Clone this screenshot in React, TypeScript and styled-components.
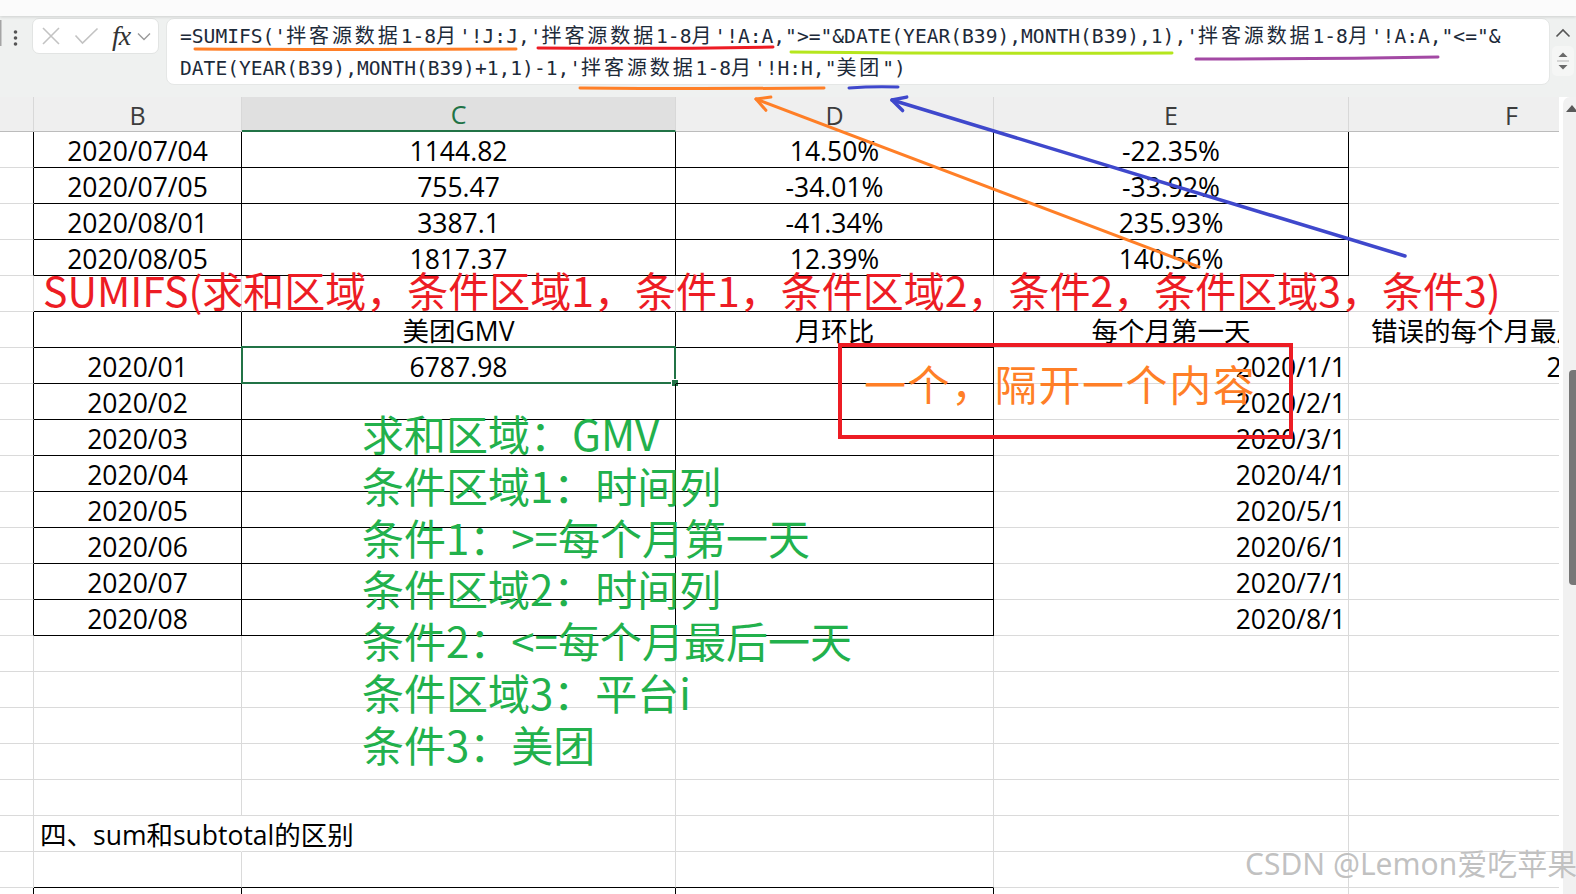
import React from 'react';
import styled, { createGlobalStyle } from 'styled-components';

const GlobalStyle = createGlobalStyle`
  html, body { margin: 0; padding: 0; background: #ffffff; }
  body {
    width: 1576px;
    height: 894px;
    overflow: hidden;
    font-family: "Open Sans", "Noto Sans CJK SC", sans-serif;
  }
  #root { width: 1576px; height: 894px; }
`;

const COLS = [34, 208, 434, 318, 355, 326];
const GRID = '#dadada';
const INK = '#000000';
const EXCEL_GREEN = '#217346';

type Align = 'left' | 'center' | 'right';

const Page = styled.div`
  position: relative;
  width: 1576px;
  height: 894px;
  overflow: hidden;
  display: flex;
  flex-direction: column;
  background: #ffffff;
`;

const TopStrip = styled.div`
  height: 16px;
  flex: 0 0 16px;
  background: #fbfbfb;
  box-shadow: 0 1px 3px rgba(0, 0, 0, 0.14);
  position: relative;
  z-index: 1;
`;

const FormulaBar = styled.div`
  height: 81px;
  flex: 0 0 81px;
  box-sizing: border-box;
  padding-top: 2px;
  display: flex;
  align-items: flex-start;
  background: #eff1f0;
`;

const Grip = styled.svg`
  flex: 0 0 32px;
  width: 32px;
  height: 36px;
`;

const FxBox = styled.div`
  flex: 0 0 127px;
  width: 127px;
  height: 36px;
  box-sizing: border-box;
  border: 1px solid #e2e4e3;
  border-radius: 7px;
  background: #ffffff;
  display: flex;
  align-items: center;
`;

const IconSlot = styled.div<{ $ml: number }>`
  margin-left: ${(p) => p.$ml}px;
  display: flex;
  align-items: center;
`;

const FxGlyph = styled.span`
  font-family: "Liberation Serif", "DejaVu Serif", serif;
  font-style: italic;
  font-size: 28px;
  line-height: 30px;
  color: #333333;
  letter-spacing: -1px;
`;

const FormulaInput = styled.div`
  margin-left: 7px;
  flex: 0 0 1384px;
  width: 1384px;
  height: 67px;
  box-sizing: border-box;
  border: 1px solid #e5e7e6;
  border-radius: 8px;
  background: #ffffff;
  padding: 2px 0 0 13px;
  overflow: hidden;
`;

const FormulaLine = styled.div`
  height: 31.5px;
  font-family: "DejaVu Sans Mono", "Liberation Mono", monospace;
  font-size: 19.6px;
  line-height: 31.5px;
  color: #1d2a39;
  white-space: pre;
`;

const Cjk = styled.span`
  font-family: "Noto Sans CJK SC", sans-serif;
  font-size: 20px;
  line-height: 1;
  letter-spacing: 2.9px;
`;

const BarControls = styled.div`
  flex: 1 1 auto;
  display: flex;
  flex-direction: column;
  align-items: center;
  padding-top: 10px;
`;

const Stepper = styled.div`
  margin-top: 8px;
  width: 22px;
  height: 30px;
  border-radius: 5px;
  background: #f5f6f5;
  display: flex;
  align-items: center;
  justify-content: center;
`;

const Body = styled.div`
  flex: 1 1 auto;
  display: flex;
  min-height: 0;
`;

const SheetArea = styled.div`
  flex: 0 0 1559px;
  width: 1559px;
  overflow: hidden;
  display: flex;
  flex-direction: column;
`;

const HeaderRow = styled.div`
  display: flex;
  height: 35px;
  flex: 0 0 35px;
`;

const HeaderCell = styled.div<{ $w: number; $active?: boolean }>`
  flex: 0 0 ${(p) => p.$w}px;
  width: ${(p) => p.$w}px;
  height: 35px;
  box-sizing: border-box;
  border-right: 1px solid #d8d8d8;
  border-bottom: ${(p) => (p.$active ? `2px solid ${EXCEL_GREEN}` : '1px solid #bcbcbc')};
  background: ${(p) => (p.$active ? '#e0e0e0' : '#efefef')};
  color: ${(p) => (p.$active ? EXCEL_GREEN : '#3c3c3c')};
  display: flex;
  align-items: center;
  justify-content: center;
  font-size: 25px;
  line-height: 30px;
  padding-top: 1px;
`;

const Row = styled.div`
  display: flex;
  height: 36px;
  flex: 0 0 36px;
`;

const Cell = styled.div<{ $w: number; $align: Align; $rb: string; $bb: string; $indent?: number }>`
  position: relative;
  flex: 0 0 ${(p) => p.$w}px;
  width: ${(p) => p.$w}px;
  height: 36px;
  box-sizing: border-box;
  border-right: 1px solid ${(p) => p.$rb};
  border-bottom: 1px solid ${(p) => p.$bb};
  display: flex;
  align-items: center;
  justify-content: ${(p) => (p.$align === 'left' ? 'flex-start' : p.$align === 'right' ? 'flex-end' : 'center')};
  padding-top: 2px;
  padding-right: ${(p) => (p.$align === 'right' ? 2 : 0)}px;
  padding-left: ${(p) => (p.$indent !== undefined ? p.$indent : p.$align === 'left' ? 6 : 0)}px;
  white-space: nowrap;
  font-size: 26.5px;
  line-height: 34px;
  color: ${INK};
`;

const Selection = styled.div`
  position: absolute;
  top: -2px;
  left: -1px;
  right: -1px;
  bottom: -1px;
  border: 2px solid ${EXCEL_GREEN};
  pointer-events: none;
`;

const FillHandle = styled.div`
  position: absolute;
  right: -5px;
  bottom: -5px;
  width: 6px;
  height: 6px;
  background: ${EXCEL_GREEN};
  border: 1px solid #ffffff;
`;

const ScrollTrack = styled.div`
  margin-left: 4px;
  flex: 0 0 13px;
  width: 13px;
  background: #f1f1f1;
  border-radius: 7px 0 0 0;
  display: flex;
  flex-direction: column;
  align-items: flex-end;
`;

const ScrollUp = styled.svg`
  margin-top: 6px;
  width: 12px;
  height: 10px;
`;

const ScrollThumb = styled.div`
  margin-top: 257px;
  width: 7px;
  height: 215px;
  background: #777777;
  border-radius: 4px 0 0 4px;
`;

const RedFormula = styled.div`
  position: absolute;
  left: 43px;
  top: 267px;
  font-family: "Noto Sans CJK SC", sans-serif;
  font-size: 41px;
  line-height: 44px;
  color: #ed1c24;
  white-space: nowrap;
  pointer-events: none;
`;

const GreenNotes = styled.div`
  position: absolute;
  left: 362px;
  top: 407px;
  font-family: "Noto Sans CJK SC", sans-serif;
  font-size: 42px;
  line-height: 51.8px;
  color: #22b14c;
  white-space: nowrap;
  pointer-events: none;
`;

const OrangeNote = styled.div`
  position: absolute;
  left: 864px;
  top: 360px;
  font-family: "Noto Sans CJK SC", sans-serif;
  font-size: 42px;
  line-height: 46px;
  letter-spacing: 1.6px;
  color: #ff7f27;
  white-space: nowrap;
  pointer-events: none;
`;

const Watermark = styled.div`
  position: absolute;
  left: 1245px;
  top: 847px;
  font-family: "Noto Sans", "Noto Sans CJK SC", sans-serif;
  font-size: 30px;
  line-height: 34px;
  color: rgba(170, 170, 170, 0.72);
  text-shadow: 0 0 1px rgba(255, 255, 255, 0.9);
  white-space: nowrap;
  pointer-events: none;
`;

const Annotations = styled.svg`
  position: absolute;
  left: 0;
  top: 0;
  width: 1576px;
  height: 894px;
  pointer-events: none;
`;

interface RowDef {
  cells?: string[];
  align?: Align[];
  indent?: (number | undefined)[];
}

const CC: Align = 'center';
const ALL_C: Align[] = [CC, CC, CC, CC, CC, CC];
const MONTH_ALIGN: Align[] = [CC, CC, CC, CC, 'right', 'right'];

const rowsData: RowDef[] = [
  { cells: ['', '2020/07/04', '1144.82', '14.50%', '-22.35%', ''] },
  { cells: ['', '2020/07/05', '755.47', '-34.01%', '-33.92%', ''] },
  { cells: ['', '2020/08/01', '3387.1', '-41.34%', '235.93%', ''] },
  { cells: ['', '2020/08/05', '1817.37', '12.39%', '140.56%', ''] },
  {},
  {
    cells: ['', '', '美团GMV', '月环比', '每个月第一天', '错误的每个月最后一天'],
    align: [CC, CC, CC, CC, CC, 'left'],
    indent: [undefined, undefined, undefined, undefined, undefined, 22],
  },
  { cells: ['', '2020/01', '6787.98', '', '2020/1/1', '2020/1/31'], align: MONTH_ALIGN },
  { cells: ['', '2020/02', '', '', '2020/2/1', ''], align: MONTH_ALIGN },
  { cells: ['', '2020/03', '', '', '2020/3/1', ''], align: MONTH_ALIGN },
  { cells: ['', '2020/04', '', '', '2020/4/1', ''], align: MONTH_ALIGN },
  { cells: ['', '2020/05', '', '', '2020/5/1', ''], align: MONTH_ALIGN },
  { cells: ['', '2020/06', '', '', '2020/6/1', ''], align: MONTH_ALIGN },
  { cells: ['', '2020/07', '', '', '2020/7/1', ''], align: MONTH_ALIGN },
  { cells: ['', '2020/08', '', '', '2020/8/1', ''], align: MONTH_ALIGN },
  {},
  {},
  {},
  {},
  {},
  {
    cells: ['', '四、sum和subtotal的区别', '', '', '', ''],
    align: [CC, 'left', CC, CC, CC, CC],
  },
  {},
  {},
];

function rightColor(r: number, c: number): string {
  if (r >= 0 && r <= 3 && c <= 4) return INK;
  if (r >= 5 && r <= 13 && c <= 3) return INK;
  if (r === 21 && c <= 3) return INK;
  if (r === 19 && c === 1) return 'transparent';
  return GRID;
}

function bottomColor(r: number, c: number): string {
  if (c === 0) return GRID;
  if (r >= 0 && r <= 4 && c <= 4) return INK;
  if (r >= 5 && r <= 13 && c <= 3) return INK;
  if (r === 20 && c <= 3) return INK;
  return GRID;
}

const CJK_RE = /([\u3000-\u303f\u4e00-\u9fff\uff00-\uffef]+)/;

function renderFormula(s: string) {
  return s.split(CJK_RE).map((part, i) =>
    i % 2 === 1 ? <Cjk key={i}>{part}</Cjk> : <React.Fragment key={i}>{part}</React.Fragment>
  );
}

const FORMULA_1 = `=SUMIFS('拌客源数据1-8月'!J:J,'拌客源数据1-8月'!A:A,">="&DATE(YEAR(B39),MONTH(B39),1),'拌客源数据1-8月'!A:A,"<="&`;
const FORMULA_2 = `DATE(YEAR(B39),MONTH(B39)+1,1)-1,'拌客源数据1-8月'!H:H,"美团")`;

const GREEN_LINES = [
  '求和区域：GMV',
  '条件区域1：时间列',
  '条件1：>=每个月第一天',
  '条件区域2：时间列',
  '条件2：<=每个月最后一天',
  '条件区域3：平台i',
  '条件3：美团',
];

function arrowPath(x1: number, y1: number, x2: number, y2: number, len = 15, ang = 28): string {
  const dx = x1 - x2;
  const dy = y1 - y2;
  const l = Math.hypot(dx, dy);
  const ux = dx / l;
  const uy = dy / l;
  const a = (ang * Math.PI) / 180;
  const rot = (s: number) => {
    const c = Math.cos(s * a);
    const n = Math.sin(s * a);
    return [x2 + len * (ux * c - uy * n), y2 + len * (ux * n + uy * c)];
  };
  const [ax, ay] = rot(1);
  const [bx, by] = rot(-1);
  return `M${ax.toFixed(1)},${ay.toFixed(1)} L${x2},${y2} L${bx.toFixed(1)},${by.toFixed(1)}`;
}

const HEADERS = ['', 'B', 'C', 'D', 'E', 'F'];

export default function App() {
  return (
    <>
      <GlobalStyle />
      <Page>
        <TopStrip />
        <FormulaBar>
          <Grip viewBox="0 0 32 36">
            <rect x="0" y="2" width="1.5" height="26" fill="#a5a5a5" />
            <circle cx="15.5" cy="14" r="1.8" fill="#555" />
            <circle cx="15.5" cy="20" r="1.8" fill="#555" />
            <circle cx="15.5" cy="26" r="1.8" fill="#555" />
          </Grip>
          <FxBox>
            <IconSlot $ml={8}>
              <svg width="20" height="20" viewBox="0 0 20 20">
                <path d="M2 2 L18 18 M18 2 L2 18" stroke="#c3c3c3" strokeWidth="1.6" fill="none" />
              </svg>
            </IconSlot>
            <IconSlot $ml={13}>
              <svg width="25" height="18" viewBox="0 0 25 18">
                <path d="M1.5 8.5 L8.5 16 L23.5 1.5" stroke="#c3c3c3" strokeWidth="1.6" fill="none" />
              </svg>
            </IconSlot>
            <IconSlot $ml={13}>
              <FxGlyph>fx</FxGlyph>
            </IconSlot>
            <IconSlot $ml={7}>
              <svg width="14" height="9" viewBox="0 0 14 9">
                <path d="M1 1.5 L7 7.5 L13 1.5" stroke="#9a9a9a" strokeWidth="1.4" fill="none" />
              </svg>
            </IconSlot>
          </FxBox>
          <FormulaInput>
            <FormulaLine>{renderFormula(FORMULA_1)}</FormulaLine>
            <FormulaLine>{renderFormula(FORMULA_2)}</FormulaLine>
          </FormulaInput>
          <BarControls>
            <svg width="16" height="10" viewBox="0 0 16 10">
              <path d="M1.5 8.5 L8 2 L14.5 8.5" stroke="#555" strokeWidth="1.6" fill="none" />
            </svg>
            <Stepper>
              <svg width="14" height="24" viewBox="0 0 14 24">
                <path d="M2.5 8 L7 3.5 L11.5 8 Z" fill="#6a6a6a" />
                <line x1="1" y1="12" x2="13" y2="12" stroke="#b5b5b5" strokeWidth="1" />
                <path d="M2.5 16 L7 20.5 L11.5 16 Z" fill="#6a6a6a" />
              </svg>
            </Stepper>
          </BarControls>
        </FormulaBar>
        <Body>
          <SheetArea>
            <HeaderRow>
              {HEADERS.map((h, c) => (
                <HeaderCell key={c} $w={COLS[c]} $active={c === 2}>
                  {h}
                </HeaderCell>
              ))}
            </HeaderRow>
            {rowsData.map((row, r) => (
              <Row key={r}>
                {COLS.map((w, c) => {
                  const text = row.cells ? row.cells[c] : '';
                  const align = (row.align || ALL_C)[c];
                  const indent = row.indent ? row.indent[c] : undefined;
                  return (
                    <Cell
                      key={c}
                      $w={w}
                      $align={align}
                      $rb={rightColor(r, c)}
                      $bb={bottomColor(r, c)}
                      $indent={indent}
                    >
                      {text}
                      {r === 6 && c === 2 && (
                        <Selection>
                          <FillHandle />
                        </Selection>
                      )}
                    </Cell>
                  );
                })}
              </Row>
            ))}
          </SheetArea>
          <ScrollTrack>
            <ScrollUp viewBox="0 0 12 10">
              <path d="M2 9 L8 2 L14 9 Z" fill="#5a5a5a" />
            </ScrollUp>
            <ScrollThumb />
          </ScrollTrack>
        </Body>

        <RedFormula>SUMIFS(求和区域，条件区域1，条件1，条件区域2，条件2，条件区域3，条件3)</RedFormula>
        <GreenNotes>
          {GREEN_LINES.map((l) => (
            <div key={l}>{l}</div>
          ))}
        </GreenNotes>
        <OrangeNote>一个，隔开一个内容</OrangeNote>
        <Watermark>CSDN @Lemon爱吃苹果</Watermark>

        <Annotations viewBox="0 0 1576 894">
          <g strokeLinecap="round" fill="none" strokeWidth="3">
            <path d="M195 49 Q360 50 516 49" stroke="#ff7f27" />
            <path d="M538 48 Q660 49 773 47" stroke="#ed1c24" />
            <path d="M791 52 Q980 54 1172 53" stroke="#b5e61d" />
            <path d="M1196 59 Q1320 59 1438 57" stroke="#a349a4" />
            <path d="M580 88 Q700 89 824 88" stroke="#ff7f27" />
            <path d="M849 88 Q874 86 898 87" stroke="#3f48cc" />
          </g>
          <g fill="none" strokeLinecap="round" strokeLinejoin="round">
            <line x1="1199" y1="267" x2="756" y2="99" stroke="#ff7f27" strokeWidth="3" />
            <path d={arrowPath(1199, 267, 756, 99)} stroke="#ff7f27" strokeWidth="3" />
            <line x1="1405" y1="256" x2="892" y2="100" stroke="#3f48cc" strokeWidth="3.5" />
            <path d={arrowPath(1405, 256, 892, 100)} stroke="#3f48cc" strokeWidth="3.5" />
          </g>
          <rect x="840" y="345" width="451" height="92" fill="none" stroke="#ed1c24" strokeWidth="4" />
        </Annotations>
      </Page>
    </>
  );
}
